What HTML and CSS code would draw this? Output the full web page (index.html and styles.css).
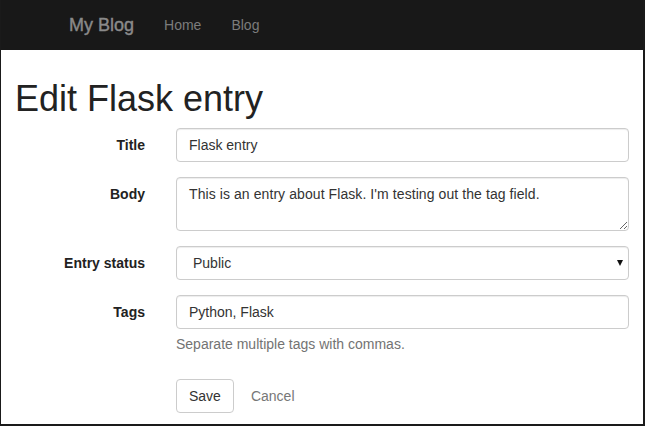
FILE: index.html
```html
<!DOCTYPE html>
<html lang="en">
<head>
<meta charset="utf-8">
<title>Edit Flask entry</title>
<link rel="stylesheet" href="styles.css">
</head>
<body>
<div class="frame">
  <nav class="navbar">
    <a class="brand" href="#">My Blog</a>
    <a class="nav-link" href="#">Home</a>
    <a class="nav-link" href="#">Blog</a>
  </nav>
  <main class="content">
    <h1 class="page-title">Edit Flask entry</h1>
    <form class="form">
      <div class="row">
        <label class="label" for="title">Title</label>
        <div class="field"><input class="control" id="title" type="text" value="Flask entry"></div>
      </div>
      <div class="row">
        <label class="label" for="body">Body</label>
        <div class="field"><textarea class="control textarea" id="body">This is an entry about Flask. I'm testing out the tag field.</textarea></div>
      </div>
      <div class="row">
        <label class="label" for="status">Entry status</label>
        <div class="field select-wrap">
          <select class="control select" id="status"><option>Public</option><option>Draft</option></select>
          <svg class="caret" width="6" height="6" viewBox="0 0 6 6"><path d="M0 0H6L3 6Z" fill="#111"/></svg>
        </div>
      </div>
      <div class="row">
        <label class="label" for="tags">Tags</label>
        <div class="field">
          <input class="control" id="tags" type="text" value="Python, Flask">
          <p class="help">Separate multiple tags with commas.</p>
        </div>
      </div>
      <div class="row">
        <div class="label"></div>
        <div class="field actions">
          <button class="btn" type="submit">Save</button>
          <a class="cancel" href="#">Cancel</a>
        </div>
      </div>
    </form>
  </main>
</div>
</body>
</html>
```
FILE: styles.css
```css
* { box-sizing: border-box; }
html, body { margin: 0; padding: 0; }
body {
  font-family: "Liberation Sans", Arial, sans-serif;
  font-size: 14px;
  line-height: 20px;
  color: #333;
  background: #fff;
}
.frame {
  height: 426px;
  border-left: 1px solid #1a1a1a;
  border-right: 2px solid #1a1a1a;
  border-bottom: 2px solid #1a1a1a;
  overflow: hidden;
}
.navbar {
  height: 50px;
  background: #181818;
  display: flex;
  align-items: center;
  padding-left: 53px;
}
.brand {
  font-size: 18px;
  line-height: 20px;
  color: #8a8a8a;
  text-decoration: none;
  padding: 0 15px;
  font-weight: normal;
  -webkit-text-stroke: 0.4px #8a8a8a;
}
.nav-link {
  color: #7c7c7c;
  text-decoration: none;
  padding: 0 15px;
  font-size: 14px;
}
.content {
  padding: 0 14px 0 14px;
}
.page-title {
  margin: 29px 0 10px 0;
  font-size: 36px;
  line-height: 39px;
  font-weight: 500;
  color: #222;
}
.row {
  display: grid;
  grid-template-columns: 130px 1fr;
  column-gap: 31px;
  margin-bottom: 15px;
}
.label {
  text-align: right;
  font-weight: bold;
  padding-top: 7px;
  color: #222;
}
.field { position: relative; }
.control {
  display: block;
  width: 100%;
  height: 34px;
  padding: 6px 12px;
  font-family: inherit;
  font-size: 14px;
  line-height: 20px;
  color: #333;
  background: #fff;
  border: 1px solid #ccc;
  border-radius: 4px;
  box-shadow: inset 0 1px 1px rgba(0,0,0,.075);
  margin: 0;
}
.textarea {
  height: 54px;
  resize: vertical;
  letter-spacing: 0.08px;
}
.select {
  -webkit-appearance: none;
  appearance: none;
  padding-left: 16px;
}
.caret {
  position: absolute;
  right: 6px;
  top: 14px;
}
.help {
  margin: 5px 0 10px 0;
  color: #737373;
}
.actions {
  display: flex;
  align-items: center;
}
.btn {
  height: 34px;
  padding: 6px 12px;
  font-family: inherit;
  font-size: 14px;
  line-height: 20px;
  color: #333;
  background: #fff;
  border: 1px solid #ccc;
  border-radius: 4px;
  margin: 0;
}
.cancel {
  color: #777;
  text-decoration: none;
  margin-left: 17px;
}
```
